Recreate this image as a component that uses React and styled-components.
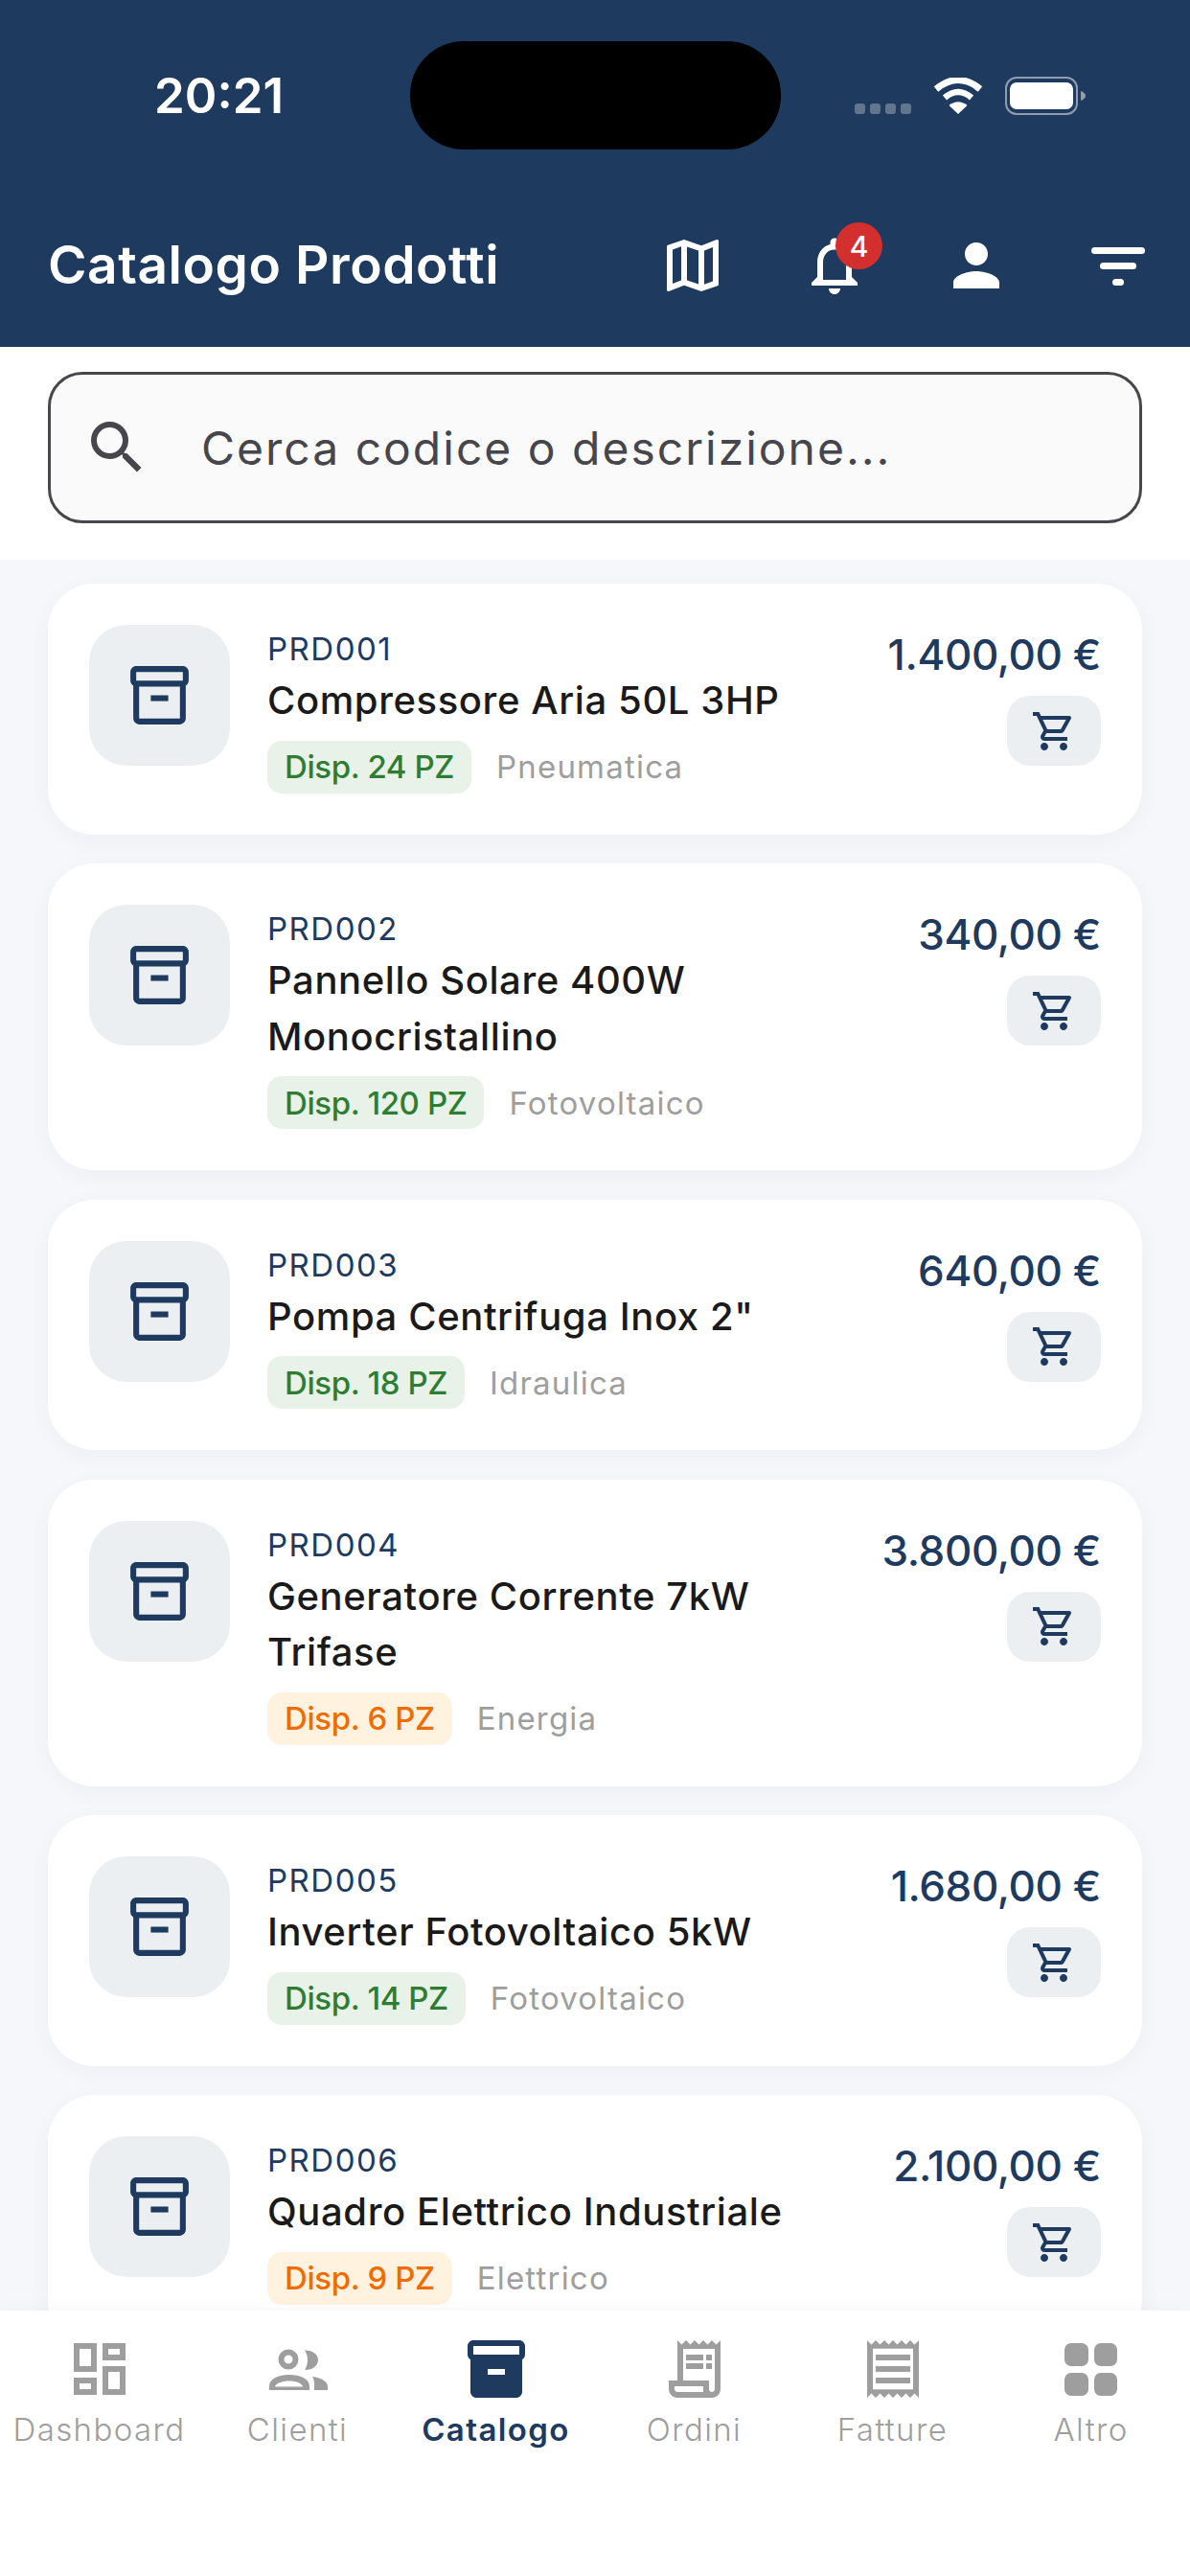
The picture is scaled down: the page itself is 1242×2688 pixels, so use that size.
import React from 'react';
import styled, { createGlobalStyle } from 'styled-components';
import {
  MdOutlineMap,
  MdOutlineNotifications,
  MdPerson,
  MdSearch,
  MdOutlineInventory2,
  MdOutlineShoppingCart,
  MdOutlineDashboard,
  MdInventory2,
  MdOutlineReceiptLong,
  MdOutlineReceipt,
} from 'react-icons/md';

const NAVY = '#1e3a5f';

const GlobalStyle = createGlobalStyle`
  html, body {
    margin: 0;
    padding: 0;
    background: #ffffff;
    font-family: Inter, "Liberation Sans", sans-serif;
  }
  * { box-sizing: border-box; }
`;

const Page = styled.div`
  width: 1242px;
  height: 2688px;
  display: flex;
  flex-direction: column;
  overflow: hidden;
  background: #f5f7fa;
`;

const Header = styled.header`
  flex: none;
  height: 362px;
  background: ${NAVY};
  color: #ffffff;
`;

const StatusBar = styled.div`
  height: 200px;
  display: grid;
  grid-template-columns: 428px 387px 1fr;
  padding-top: 43px;
`;

const Time = styled.div`
  height: 113px;
  padding-left: 161px;
  display: flex;
  align-items: center;
  font-size: 51px;
  font-weight: 600;
`;

const Island = styled.div`
  height: 113px;
  border-radius: 56px;
  background: #000000;
`;

const StatusIcons = styled.div`
  height: 113px;
  padding-left: 77px;
  display: flex;
  align-items: center;
  gap: 23px;
`;

const SignalDots = styled.div`
  display: flex;
  gap: 5px;
  align-self: flex-start;
  margin-top: 65px;
`;

const SignalDot = styled.span`
  width: 11px;
  height: 11px;
  border-radius: 3px;
  background: rgba(255, 255, 255, 0.3);
`;

const TitleRow = styled.div`
  height: 154px;
  padding: 0 39px 0 50px;
  display: flex;
  align-items: center;
`;

const Title = styled.h1`
  flex: 1;
  margin: 0;
  padding-bottom: 3px;
  font-size: 55px;
  font-weight: 600;
  letter-spacing: 0.55px;
`;

const HeaderActions = styled.div`
  display: flex;
  gap: 76px;
`;

const HeaderAction = styled.div`
  position: relative;
  width: 72px;
  height: 72px;
  font-size: 72px;
  line-height: 0;
`;

const Badge = styled.span`
  position: absolute;
  top: -9px;
  left: 37px;
  width: 49px;
  height: 49px;
  border-radius: 50%;
  background: #d32f2f;
  display: flex;
  align-items: center;
  justify-content: center;
  font-size: 30px;
  line-height: 1;
  font-weight: 500;
`;

const SearchSection = styled.div`
  flex: none;
  padding: 26px 50px 38px;
  background: #ffffff;
`;

const SearchBox = styled.div`
  height: 158px;
  padding-left: 33px;
  display: flex;
  align-items: center;
  gap: 52px;
  border: 3px solid #46464c;
  border-radius: 36px;
  background: #fafafa;
  color: #46464c;
  font-size: 72px;
`;

const Placeholder = styled.span`
  font-size: 48px;
  letter-spacing: 2px;
`;

const List = styled.main`
  flex: 1;
  min-height: 0;
  overflow: hidden;
  padding: 25px 50px 0;
  display: flex;
  flex-direction: column;
  gap: 30.6px;
`;

const Card = styled.article`
  flex: none;
  padding: 43px;
  display: flex;
  align-items: flex-start;
  border-radius: 48px;
  background: #ffffff;
  box-shadow: 0 6px 24px rgba(30, 58, 95, 0.04);
`;

const Thumb = styled.div`
  flex: none;
  width: 147px;
  height: 147px;
  margin-right: 39px;
  display: flex;
  align-items: center;
  justify-content: center;
  border-radius: 39px;
  background: #eceff1;
  color: ${NAVY};
  font-size: 73px;
`;

const Info = styled.div`
  flex: 1;
  min-width: 0;
`;

const Code = styled.div`
  font-size: 33px;
  line-height: 50px;
  letter-spacing: 1.5px;
  color: ${NAVY};
`;

const Name = styled.div`
  width: 560px;
  font-size: 40px;
  line-height: 58.5px;
  font-weight: 500;
  letter-spacing: 0.6px;
  color: #1a1a1a;
`;

const Meta = styled.div`
  margin-top: 12px;
  display: flex;
  align-items: center;
  gap: 26px;
`;

const Stock = styled.span`
  height: 55px;
  padding: 0 18px;
  display: flex;
  align-items: center;
  border-radius: 15px;
  font-size: 33px;
  font-weight: 500;
  letter-spacing: -0.4px;
  background: ${(p) => (p.$low ? '#fff3e0' : '#e8f2e9')};
  color: ${(p) => (p.$low ? '#ef6c00' : '#2e7d32')};
`;

const Category = styled.span`
  font-size: 33px;
  letter-spacing: 1.2px;
  color: #9e9e9e;
`;

const Side = styled.div`
  flex: none;
  display: flex;
  flex-direction: column;
  align-items: flex-end;
  gap: 10px;
`;

const Price = styled.div`
  height: 64px;
  line-height: 62px;
  font-size: 44px;
  font-weight: 500;
  letter-spacing: -0.4px;
  color: ${NAVY};
`;

const CartButton = styled.button`
  width: 98px;
  height: 73px;
  padding: 0;
  border: none;
  display: flex;
  align-items: center;
  justify-content: center;
  border-radius: 24px;
  background: #eceff1;
  color: ${NAVY};
  font-size: 48px;
`;

const BottomNav = styled.nav`
  flex: none;
  height: 277px;
  padding-top: 25px;
  display: grid;
  grid-template-columns: repeat(6, 1fr);
  align-items: start;
  background: #ffffff;
  box-shadow: 0 -6px 18px rgba(0, 0, 0, 0.02);
  position: relative;
`;

const NavItem = styled.div`
  display: flex;
  flex-direction: column;
  align-items: center;
  color: ${(p) => (p.$active ? NAVY : '#9e9e9e')};
  font-size: 72px;
  line-height: 0;
`;

const NavLabel = styled.span`
  margin-top: 7px;
  font-size: 33px;
  line-height: 40px;
  letter-spacing: 1.4px;
  font-weight: ${(p) => (p.$active ? 600 : 300)};
`;

const WifiIcon = () => (
  <svg width="52" height="38" viewBox="0 0 52 38" fill="none">
    <path d="M3 12 Q26 -7 49 12" stroke="#fff" strokeWidth="7" />
    <path d="M12 21 Q26 9 40 21" stroke="#fff" strokeWidth="6.5" />
    <path d="M26 38 L16.5 29 Q26 21.5 35.5 29 Z" fill="#fff" />
  </svg>
);

const BatteryIcon = () => (
  <svg width="84" height="40" viewBox="0 0 84 40" fill="none">
    <rect x="1" y="1" width="74" height="38" rx="11" stroke="#fff" strokeOpacity="0.5" strokeWidth="2" />
    <rect x="5" y="6" width="66" height="28" rx="7" fill="#fff" />
    <path d="M79 15 Q84 17 84 20 Q84 23 79 25 Z" fill="#fff" fillOpacity="0.5" />
  </svg>
);

const FilterIcon = () => (
  <svg width="72" height="72" viewBox="0 0 72 72" fill="#fff">
    <rect x="8" y="17" width="56" height="7" rx="3.5" />
    <rect x="17" y="33" width="38" height="7" rx="3.5" />
    <rect x="30" y="50" width="12" height="7" rx="3.5" />
  </svg>
);

const PeopleIcon = () => (
  <svg width="72" height="72" viewBox="0 0 72 72" fill="currentColor">
    <path
      fillRule="evenodd"
      d="M26 15.5a10.5 10.5 0 1 1 0 21a10.5 10.5 0 1 1 0-21zM26 21.5a4.5 4.5 0 1 0 0 9a4.5 4.5 0 1 0 0-9z"
    />
    <path d="M43 16.5C52 16.5 57 21 57 26.5C57 32 52 37 43 37C47 31 47 22 43 16.5Z" />
    <path
      fillRule="evenodd"
      d="M6 58V54C6 46 16 42 27 42C38 42 48 46 48 54V58ZM12 54.5H41C40 51 35 48.5 27 48.5C19 48.5 13 51 12 54.5Z"
    />
    <path d="M51 44C60 45 67 49 67 54V58H53V54C53 50 53 47 51 44Z" />
  </svg>
);

const AppsIcon = () => (
  <svg width="72" height="72" viewBox="0 0 72 72" fill="currentColor">
    <rect x="8" y="9" width="25" height="24" rx="7" />
    <rect x="39" y="9" width="24" height="24" rx="7" />
    <rect x="8" y="40" width="25" height="24" rx="7" />
    <rect x="39" y="40" width="24" height="24" rx="7" />
  </svg>
);

const products = [
  { code: 'PRD001', name: 'Compressore Aria 50L 3HP', qty: 24, category: 'Pneumatica', price: '1.400,00 €' },
  { code: 'PRD002', name: 'Pannello Solare 400W Monocristallino', qty: 120, category: 'Fotovoltaico', price: '340,00 €' },
  { code: 'PRD003', name: 'Pompa Centrifuga Inox 2"', qty: 18, category: 'Idraulica', price: '640,00 €' },
  { code: 'PRD004', name: 'Generatore Corrente 7kW Trifase', qty: 6, category: 'Energia', price: '3.800,00 €' },
  { code: 'PRD005', name: 'Inverter Fotovoltaico 5kW', qty: 14, category: 'Fotovoltaico', price: '1.680,00 €' },
  { code: 'PRD006', name: 'Quadro Elettrico Industriale', qty: 9, category: 'Elettrico', price: '2.100,00 €' },
];

const navItems = [
  { label: 'Dashboard', icon: <MdOutlineDashboard /> },
  { label: 'Clienti', icon: <PeopleIcon /> },
  { label: 'Catalogo', icon: <MdInventory2 />, active: true },
  { label: 'Ordini', icon: <MdOutlineReceiptLong /> },
  { label: 'Fatture', icon: <MdOutlineReceipt /> },
  { label: 'Altro', icon: <AppsIcon /> },
];

const App = () => (
  <Page>
    <GlobalStyle />
    <Header>
      <StatusBar>
        <Time>20:21</Time>
        <Island />
        <StatusIcons>
          <SignalDots>
            <SignalDot />
            <SignalDot />
            <SignalDot />
            <SignalDot />
          </SignalDots>
          <WifiIcon />
          <BatteryIcon />
        </StatusIcons>
      </StatusBar>
      <TitleRow>
        <Title>Catalogo Prodotti</Title>
        <HeaderActions>
          <HeaderAction>
            <MdOutlineMap />
          </HeaderAction>
          <HeaderAction>
            <MdOutlineNotifications />
            <Badge>4</Badge>
          </HeaderAction>
          <HeaderAction>
            <MdPerson />
          </HeaderAction>
          <HeaderAction>
            <FilterIcon />
          </HeaderAction>
        </HeaderActions>
      </TitleRow>
    </Header>

    <SearchSection>
      <SearchBox>
        <MdSearch />
        <Placeholder>Cerca codice o descrizione...</Placeholder>
      </SearchBox>
    </SearchSection>

    <List>
      {products.map((p) => (
        <Card key={p.code}>
          <Thumb>
            <MdOutlineInventory2 />
          </Thumb>
          <Info>
            <Code>{p.code}</Code>
            <Name>{p.name}</Name>
            <Meta>
              <Stock $low={p.qty < 10}>Disp. {p.qty} PZ</Stock>
              <Category>{p.category}</Category>
            </Meta>
          </Info>
          <Side>
            <Price>{p.price}</Price>
            <CartButton>
              <MdOutlineShoppingCart />
            </CartButton>
          </Side>
        </Card>
      ))}
    </List>

    <BottomNav>
      {navItems.map((item) => (
        <NavItem key={item.label} $active={item.active}>
          {item.icon}
          <NavLabel $active={item.active}>{item.label}</NavLabel>
        </NavItem>
      ))}
    </BottomNav>
  </Page>
);

export default App;
